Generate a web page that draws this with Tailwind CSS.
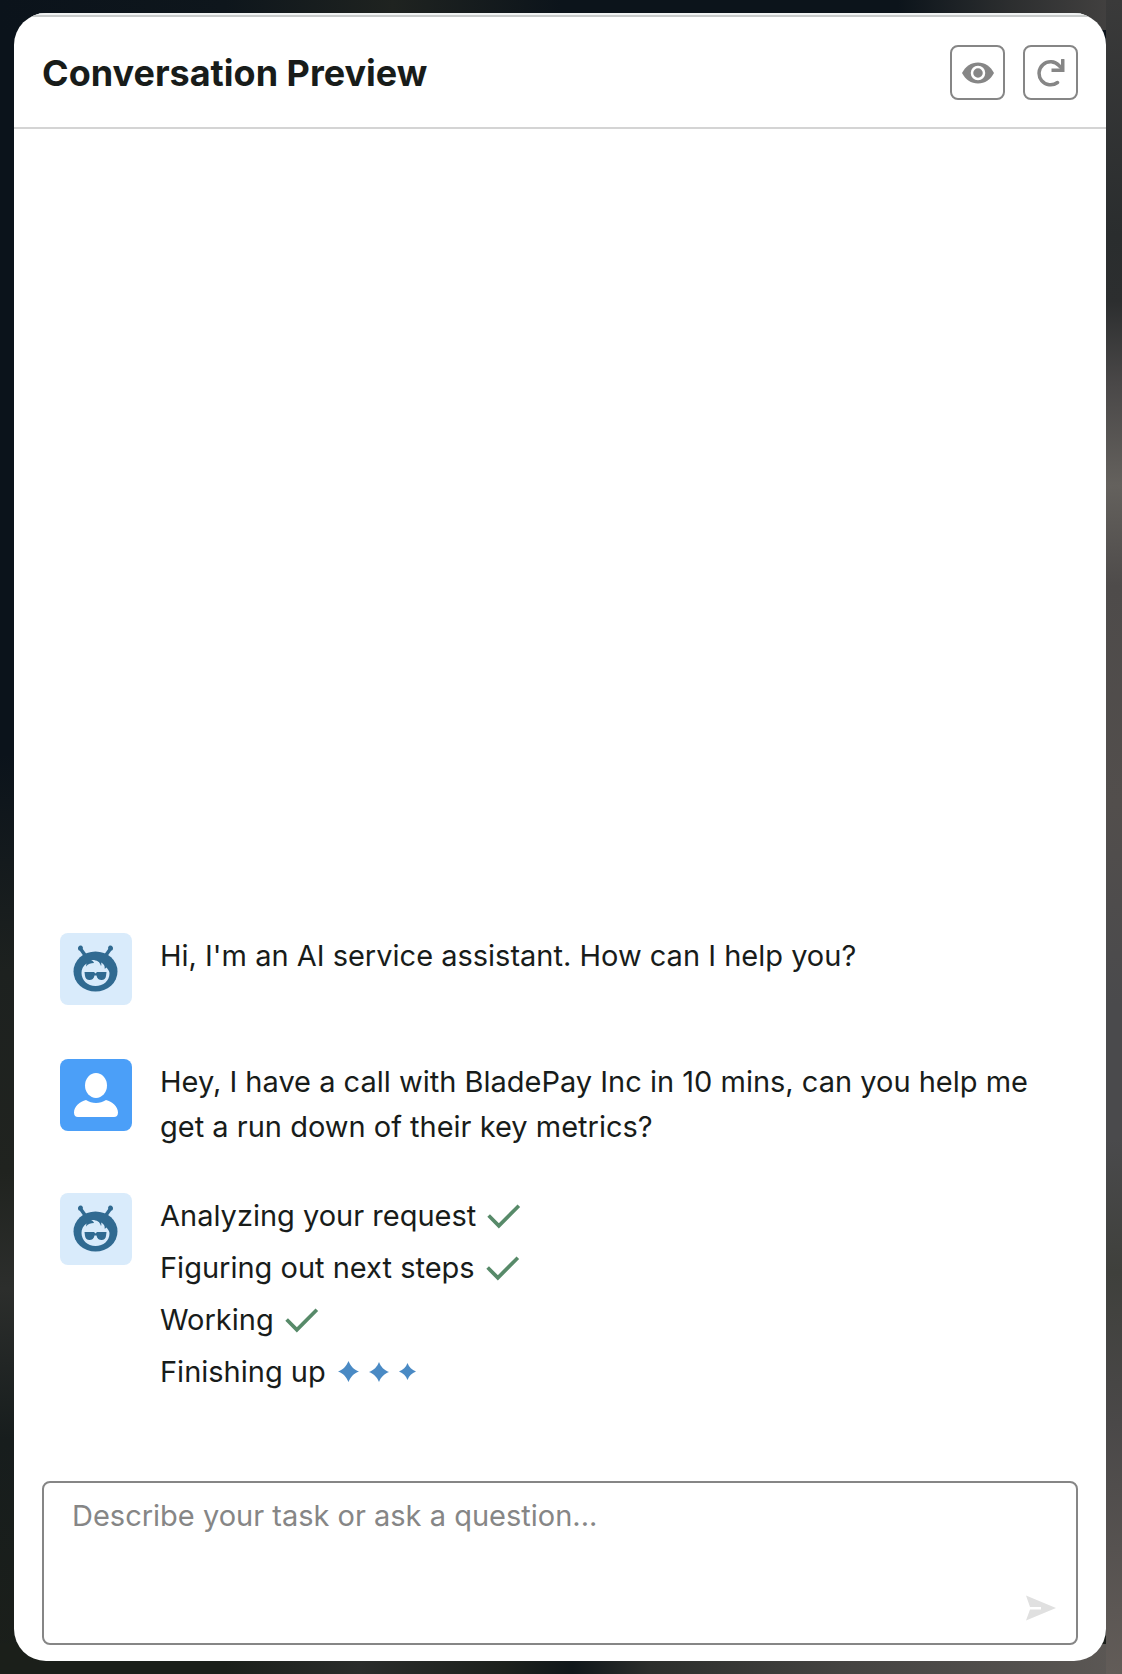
<!DOCTYPE html>
<html lang="en">
  <head>
    <meta charset="UTF-8" />
    <meta name="viewport" content="width=device-width, initial-scale=1.0" />
    <script src="https://cdn.jsdelivr.net/npm/@tailwindcss/browser@4"></script>
    <title>Conversation Preview</title>
  </head>
  <body class="font-['Inter','Liberation_Sans',sans-serif] text-[#181c1a] [background:linear-gradient(#3a3a3a,#2a2d2e_14%,#2c2e2f_18%,#4a4848_23%,#64615d_29%,#4e4b4a_35%,#524e4c_48%,#4a4a4c_60%,#4a4a4c_68%,#3f403c_76%,#4a4848_85%,#625c58)_right/16px_100%_no-repeat,linear-gradient(to_right,#0b131b,#0e161c_20%,#1f2320_35%,#0c141b_50%,#0c141b_80%,#2c2e2f_90%,#454342)_top/100%_30px_no-repeat,linear-gradient(to_right,#1b1f1a,#1b1f1a_20%,#2a2c2b_32%,#1d211d_45%,#10171a_51%,#2c2e2c_58%,#444341_75%,#5c5855)_bottom/100%_30px_no-repeat,linear-gradient(#0b131b,#0b131b_45%,#1d211f_58%,#20231f_70%,#2c2e2c_77%,#171d1d_86%,#1b1f1a)]">
    <!-- Icons -->
    <svg class="hidden">
      <symbol id="icon_bot" viewBox="0 0 72 72">
        <g fill="#306a91">
          <path d="M18 15.500a2.500 2.500 0 1 1 4.800.5l4.700 6.500-3 2-4.700-6.700c-1.200-.3-1.800-1.200-1.800-2.300z" />
          <path d="M53 15.500a2.500 2.500 0 1 0-4.800.5l-4.700 6.500 3 2 4.700-6.700c1.200-.3 1.800-1.200 1.800-2.300z" />
          <ellipse cx="35.500" cy="38.500" rx="22" ry="20" />
        </g>
        <path fill="#d9ebfb" d="M21.500 40c0-4 1.500-7 5-9.500l-.5 3c2-3 5-3.500 8-3.500-.5-1.500-1.500-2.500-3-3 5-.5 9 1.500 10 6 .5-1 .5-2 0-3.500 4 2 4 5 3.500 6 1 0 1.500-.5 2-1 2 2.500 3 4 3 6 0 7-6 12.500-14 12.500S21.500 47 21.500 40z" />
        <path fill="#306a91" d="M24.500 39h9.500l1.500 1.500L37 39h9.500l-.5 4c-.3 2.500-2 4-4.500 4s-4.500-1.500-5-4.500h-2c-.5 3-2.500 4.500-5 4.500s-4-1.500-4.500-4z" />
      </symbol>
      <symbol id="icon_check" viewBox="0 0 36 28">
        <path fill="none" stroke="#578a69" stroke-width="4" d="M2 13.500 13 24.500 34.500 3" />
      </symbol>
      <symbol id="icon_spark" viewBox="0 0 20 20">
        <path fill="#4a8ac4" d="M10 0c2 5 5 8 10 10-5 2-8 5-10 10-2-5-5-8-10-10 5-2 8-5 10-10z" />
      </symbol>
    </svg>

    <div class="flex min-h-screen py-[13px] pl-[14px] pr-4">
      <main class="flex flex-col w-full bg-white rounded-4xl overflow-hidden">
        <header class="flex items-center justify-between h-[116px] px-7 pt-[5px] border-b-2 border-[#d4d4d4] shadow-[inset_0_2px_#f0f2f2,inset_0_4px_#c8cbcb]">
          <h1 class="font-bold text-4xl">Conversation Preview</h1>
          <div class="flex gap-[18px]">
            <button type="button" aria-label="Preview" class="flex items-center justify-center size-[55px] rounded-lg border-2 border-[#868686]">
              <svg class="w-8 h-[22px]" viewBox="0 0 32 22">
                <path fill="#868686" d="M16 0.500c7 0 12.500 4 16 10.500-3.500 6.500-9 10.500-16 10.500S3.500 17.500 0 11C3.500 4.500 9 .5 16 .5z" />
                <circle cx="16" cy="11" r="6" fill="#868686" stroke="#fff" stroke-width="2.500" />
              </svg>
            </button>
            <button type="button" aria-label="Refresh" class="flex items-center justify-center size-[55px] rounded-lg border-2 border-[#868686]">
              <svg class="size-7" viewBox="0 0 28 28">
                <path fill="none" stroke="#868686" stroke-width="3.500" stroke-linecap="round" d="M20.500 23.500A11.500 11.500 0 1 1 22 6.500l2 2" />
                <path fill="#868686" d="M24 .5q0-.5.500-.5h2.500q.5 0 .5.500V13H14.500V9.500H24z" />
              </svg>
            </button>
          </div>
        </header>

        <!-- Messages -->
        <section class="flex flex-col grow justify-end gap-11 px-[46px] pb-[43px] text-[29px] leading-[45px]">
          <div class="flex gap-7">
            <div class="shrink-0 pb-[10px]">
              <svg class="size-[72px] rounded-lg bg-[#d9ebfb]"><use href="#icon_bot" /></svg>
            </div>
            <p>Hi, I'm an AI service assistant. How can I help you?</p>
          </div>
          <div class="flex gap-7">
            <svg class="shrink-0 size-[72px] rounded-lg bg-[#4b9ff8]" viewBox="0 0 72 72">
              <ellipse cx="36" cy="26.500" rx="11" ry="12.500" fill="#fff" />
              <path fill="#fff" d="M26 41c6 4 14 4 20 0 6 1.500 12 6.500 12 12.500 0 3-1.500 4.500-4 4.500H18c-2.500 0-4-1.500-4-4.500C14 47.500 20 42.500 26 41z" />
            </svg>
            <p>Hey, I have a call with BladePay Inc in 10 mins, can you help me get a run down of their key metrics?</p>
          </div>
          <div class="flex gap-7">
            <svg class="shrink-0 size-[72px] rounded-lg bg-[#d9ebfb]"><use href="#icon_bot" /></svg>
            <ul class="flex flex-col gap-[7px]">
              <li class="flex items-center gap-[10px]">Analyzing your request <svg class="w-[35px] h-[26px]"><use href="#icon_check" /></svg></li>
              <li class="flex items-center gap-[10px]">Figuring out next steps <svg class="w-[35px] h-[26px]"><use href="#icon_check" /></svg></li>
              <li class="flex items-center gap-[10px]">Working <svg class="w-[35px] h-[26px]"><use href="#icon_check" /></svg></li>
              <li class="flex items-center gap-3">
                Finishing up
                <span class="flex items-center gap-[10px]">
                  <svg class="size-[21px]"><use href="#icon_spark" /></svg>
                  <svg class="size-5"><use href="#icon_spark" /></svg>
                  <svg class="size-[17px]"><use href="#icon_spark" /></svg>
                </span>
              </li>
            </ul>
          </div>
        </section>

        <!-- Prompt -->
        <form class="relative px-7 pt-11 pb-4">
          <textarea aria-label="Message" placeholder="Describe your task or ask a question..." class="block w-full h-[164px] resize-none rounded-lg border-2 border-[#868686] px-7 py-[10px] text-[29px] leading-[45px] placeholder:text-[#868686]"></textarea>
          <button type="submit" aria-label="Send" class="absolute right-[50px] bottom-10">
            <svg class="w-[30px] h-[26px]" viewBox="0 0 30 26">
              <path fill="#e0e0e0" d="M0 .5 30 13 0 25.500 4 14.500h11v-2.500H4z" />
            </svg>
          </button>
        </form>
      </main>
    </div>
  </body>
</html>
